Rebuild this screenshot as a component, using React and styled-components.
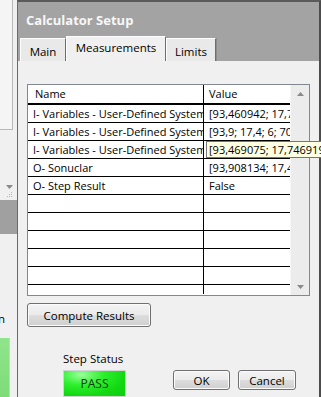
import React from "react";
import styled, { createGlobalStyle } from "styled-components";

const GlobalStyle = createGlobalStyle`
  html, body {
    margin: 0;
    padding: 0;
    background: #f0f0f0;
  }
  body {
    font-family: "Open Sans", "Noto Sans", sans-serif;
    font-size: 11.5px;
    color: #000;
  }
`;

const Screen = styled.div`
  display: flex;
  width: 321px;
  height: 397px;
  overflow: hidden;
  background: #f0f0f0;
`;

const SidePanel = styled.div`
  width: 17px;
  flex-shrink: 0;
  display: flex;
  flex-direction: column;
  overflow: hidden;
`;

const SideList = styled.div`
  width: 12px;
  height: 132px;
  background: #f5f5f5;
  border-right: 1px solid #b9b9b9;
  border-bottom: 1px solid #b9b9b9;
`;

const SideScroll = styled.div`
  height: 71px;
  display: flex;
  flex-direction: column;
  align-items: flex-end;
  justify-content: flex-end;
  padding-right: 4px;
  gap: 3px;
  box-sizing: border-box;
  padding-bottom: 2px;
`;

const GrayBand = styled.div`
  height: 35px;
  background: #a0a0a0;
`;

const SideCaption = styled.div`
  margin-top: 77px;
  width: 5px;
  display: flex;
  justify-content: flex-end;
  line-height: 16px;
  white-space: nowrap;
`;

const GreenStub = styled.div`
  margin-top: 11px;
  width: 9px;
  height: 60px;
  border-right: 1px solid #cfcfcf;
  background: linear-gradient(180deg, #8fe58b 0%, #7ddc78 100%);
`;

const Dialog = styled.div`
  flex: 1;
  display: flex;
  flex-direction: column;
  border-left: 1px solid #6a6a6a;
  border-right: 3px solid #4c4c4c;
  border-top: 2px solid #5a5a5a;
`;

const TitleBar = styled.div`
  height: 60px;
  background: #a3a3a3;
  display: flex;
  flex-direction: column;
  justify-content: space-between;
`;

const Title = styled.div`
  padding: 9px 0 0 8px;
  font-size: 13px;
  font-weight: 700;
  color: #f7f7f7;
  line-height: 18px;
`;

const TabRow = styled.div`
  display: flex;
  align-items: flex-end;
  padding-left: 2px;
`;

const Tab = styled.div`
  box-sizing: border-box;
  width: ${(p) => p.$w}px;
  height: ${(p) => (p.$active ? 25 : 23)}px;
  padding-top: ${(p) => (p.$active ? 3 : 5)}px;
  text-align: center;
  line-height: 16px;
  background: ${(p) => (p.$active ? "#f0f0f0" : "#e9e9e9")};
  border-top: 1px solid #fdfdfd;
  border-left: 1px solid #fdfdfd;
  border-right: 1px solid #6e6e6e;
  box-shadow: ${(p) => (p.$last ? "1px 0 0 #8c8c8c" : "none")};
`;

const Body = styled.div`
  flex: 1;
  background: #f0f0f0;
  padding: 23px 9px 0 9px;
  display: flex;
  flex-direction: column;
`;

const Table = styled.div`
  width: 283px;
  height: 212px;
  box-sizing: border-box;
  border: 1px solid #828790;
  background: #fff;
  display: flex;
  font-size: 11px;
`;

const Grid = styled.div`
  width: 262px;
  display: flex;
  flex-direction: column;
`;

const Row = styled.div`
  position: relative;
  display: grid;
  grid-template-columns: 175px 87px;
  height: ${(p) => p.$h}px;
  border-bottom: ${(p) => p.$line}px solid #000;
`;

const Cell = styled.div`
  padding-left: ${(p) => p.$pad}px;
  line-height: 17px;
  white-space: nowrap;
  overflow: hidden;
  border-left: ${(p) => (p.$value ? "1px solid #000" : "none")};
`;

const Tip = styled.div`
  position: absolute;
  left: 178px;
  top: 0;
  height: 15px;
  padding: 0 6px 0 2px;
  line-height: 15px;
  white-space: nowrap;
  background: #ffffe1;
  border: 1px solid #767676;
  z-index: 2;
`;

const ScrollBar = styled.div`
  width: 18px;
  background: #ececec;
  border-left: 1px solid #f7f7f7;
  display: flex;
  flex-direction: column;
  justify-content: space-between;
  align-items: center;
  padding: 7px 0 6px;
`;

const Button = styled.button`
  box-sizing: border-box;
  width: ${(p) => p.$w}px;
  height: ${(p) => p.$h}px;
  padding: 0;
  font-family: inherit;
  font-size: 11.5px;
  color: #000;
  border: 1px solid #707070;
  border-radius: 3px;
  background: linear-gradient(180deg, #f3f3f3 0%, #ebebeb 48%, #dddddd 52%, #cfcfcf 100%);
  box-shadow: inset 0 0 0 1px #fbfbfb;
`;

const ComputeRow = styled.div`
  margin-top: 7px;
`;

const Footer = styled.div`
  display: flex;
  align-items: flex-start;
  margin-top: 24px;
`;

const StatusGroup = styled.div`
  margin-left: 36px;
  display: flex;
  flex-direction: column;
  gap: 3px;
`;

const StatusLabel = styled.div`
  line-height: 16px;
`;

const PassLamp = styled.div`
  box-sizing: border-box;
  width: 63px;
  height: 27px;
  border: 1px solid #d3d3d3;
  background: radial-gradient(ellipse at 28% 15%, #9bff9b 0%, #2ef02e 35%, #12d812 70%, #0fcf0f 100%);
  color: #0d3a0d;
  font-size: 12px;
  text-align: center;
  line-height: 26px;
`;

const ButtonGroup = styled.div`
  margin-left: 47px;
  padding-top: 19px;
  display: flex;
  gap: 8px;
`;

const Arrow = ({ up }) => (
  <svg width="7" height="4" viewBox="0 0 7 4">
    <path d={up ? "M0 4 L3.5 0 L7 4 Z" : "M0 0 L7 0 L3.5 4 Z"} fill="#8a8a8a" />
  </svg>
);

const Grip = () => (
  <svg width="6" height="6" viewBox="0 0 6 6">
    <rect x="4" y="0" width="1" height="1" fill="#b5b5b5" />
    <rect x="2" y="2" width="1" height="1" fill="#b5b5b5" />
    <rect x="4" y="2" width="1" height="1" fill="#b5b5b5" />
    <rect x="0" y="4" width="1" height="1" fill="#b5b5b5" />
    <rect x="2" y="4" width="1" height="1" fill="#b5b5b5" />
    <rect x="4" y="4" width="1" height="1" fill="#b5b5b5" />
  </svg>
);

const rows = [
  { name: "I- Variables - User-Defined System", value: "[93,460942; 17,746919]" },
  { name: "I- Variables - User-Defined System", value: "[93,9; 17,4; 6; 70]" },
  { name: "I- Variables - User-Defined System", value: "", tip: "[93,469075; 17,746919" },
  { name: "O- Sonuclar", value: "[93,908134; 17,4]" },
  { name: "O- Step Result", value: "False" },
  { name: "", value: "" },
  { name: "", value: "" },
  { name: "", value: "" },
  { name: "", value: "" },
  { name: "", value: "" },
];

const App = () => {
  return (
    <Screen>
      <GlobalStyle />
      <SidePanel>
        <SideList />
        <SideScroll>
          <Arrow />
          <Grip />
        </SideScroll>
        <GrayBand />
        <SideCaption>Kalibrasyon</SideCaption>
        <GreenStub />
      </SidePanel>
      <Dialog>
        <TitleBar>
          <Title>Calculator Setup</Title>
          <TabRow>
            <Tab $w={46}>Main</Tab>
            <Tab $w={100} $active>
              Measurements
            </Tab>
            <Tab $w={50} $last>
              Limits
            </Tab>
          </TabRow>
        </TitleBar>
        <Body>
          <Table>
            <Grid>
              <Row $h={18} $line={2}>
                <Cell $pad={7}>Name</Cell>
                <Cell $pad={5} $value>
                  Value
                </Cell>
              </Row>
              {rows.map((r, i) => (
                <Row key={i} $h={17} $line={1}>
                  <Cell $pad={5}>{r.name}</Cell>
                  <Cell $pad={5} $value>
                    {r.value}
                  </Cell>
                  {r.tip && <Tip>{r.tip}</Tip>}
                </Row>
              ))}
              <Row $h={9} $line={0}>
                <Cell />
                <Cell $value />
              </Row>
            </Grid>
            <ScrollBar>
              <Arrow up />
              <Arrow />
            </ScrollBar>
          </Table>
          <ComputeRow>
            <Button $w={124} $h={24}>
              Compute Results
            </Button>
          </ComputeRow>
          <Footer>
            <StatusGroup>
              <StatusLabel>Step Status</StatusLabel>
              <PassLamp>PASS</PassLamp>
            </StatusGroup>
            <ButtonGroup>
              <Button $w={57} $h={20}>
                OK
              </Button>
              <Button $w={58} $h={20}>
                Cancel
              </Button>
            </ButtonGroup>
          </Footer>
        </Body>
      </Dialog>
    </Screen>
  );
};

export default App;
